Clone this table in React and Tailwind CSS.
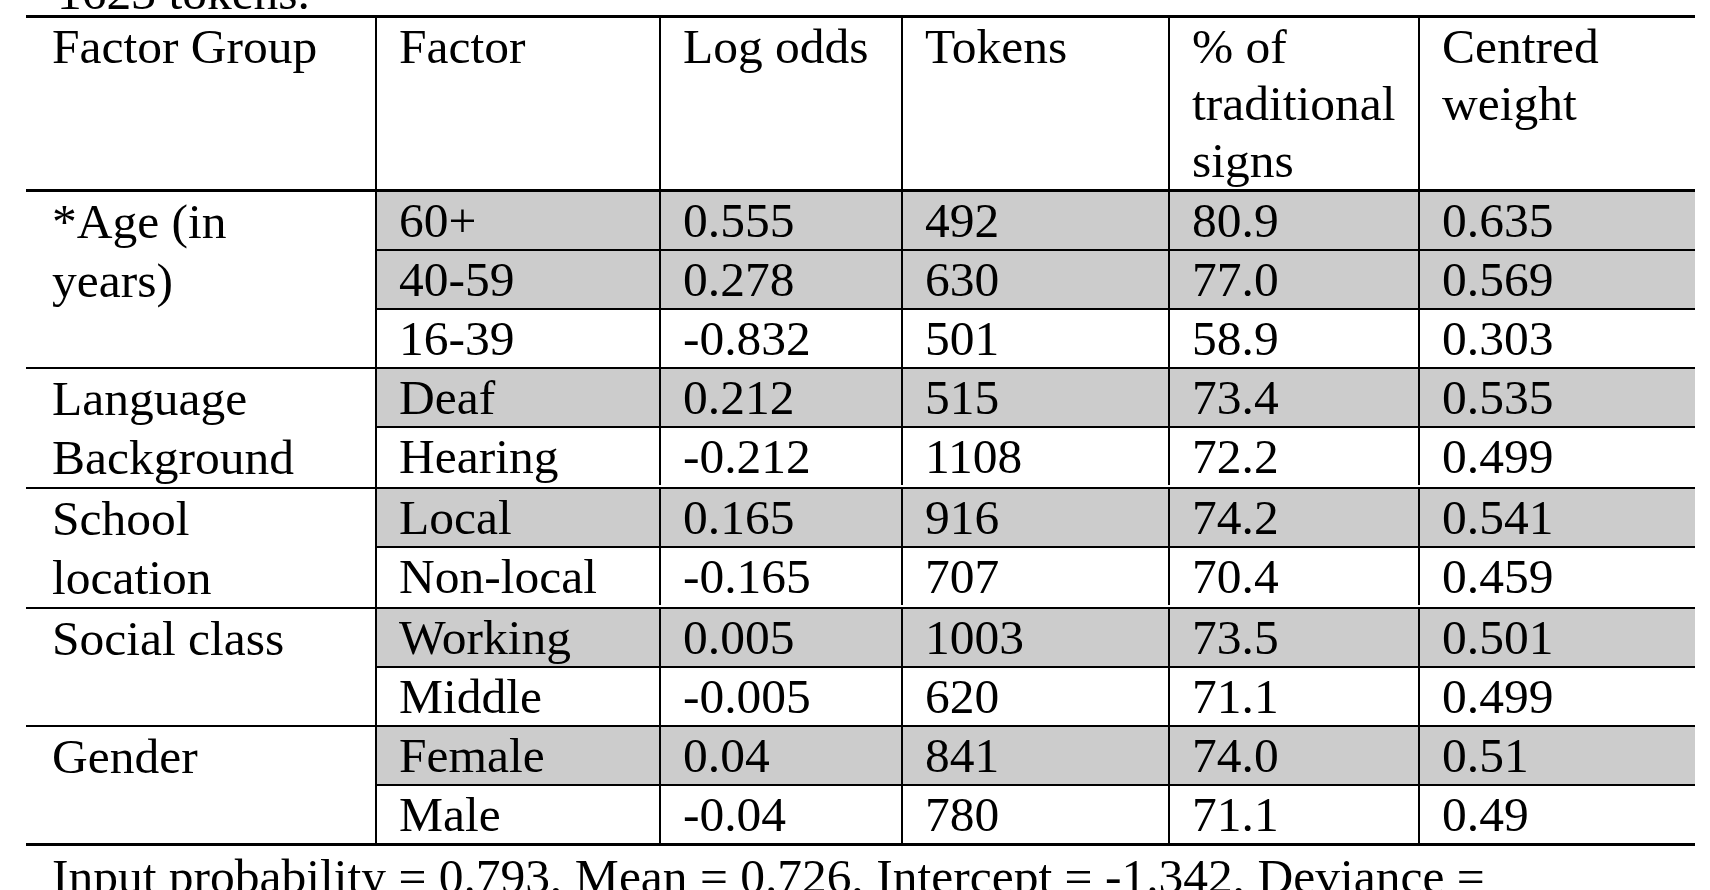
const groups = [
  {
    name: '*Age (in years)',
    rows: [
      ['60+', '0.555', '492', '80.9', '0.635', true],
      ['40-59', '0.278', '630', '77.0', '0.569', true],
      ['16-39', '-0.832', '501', '58.9', '0.303', false],
    ],
  },
  {
    name: 'Language Background',
    rows: [
      ['Deaf', '0.212', '515', '73.4', '0.535', true],
      ['Hearing', '-0.212', '1108', '72.2', '0.499', false],
    ],
  },
  {
    name: 'School location',
    rows: [
      ['Local', '0.165', '916', '74.2', '0.541', true],
      ['Non-local', '-0.165', '707', '70.4', '0.459', false],
    ],
  },
  {
    name: 'Social class',
    rows: [
      ['Working', '0.005', '1003', '73.5', '0.501', true],
      ['Middle', '-0.005', '620', '71.1', '0.499', false],
    ],
  },
  {
    name: 'Gender',
    rows: [
      ['Female', '0.04', '841', '74.0', '0.51', true],
      ['Male', '-0.04', '780', '71.1', '0.49', false],
    ],
  },
];

function Row({ cells, first }) {
  const [factor, logOdds, tokens, pct, weight, shaded] = cells;
  return (
    <div
      className={`flex ${first ? 'h-[57px]' : 'h-[59px] border-t-2 border-black'} ${
        shaded ? 'bg-[#cccccc]' : ''
      }`}
    >
      <div className="w-[282px] pl-[22px]">{factor}</div>
      <div className="w-[242px] border-l-2 border-black pl-[22px]">{logOdds}</div>
      <div className="w-[267px] border-l-2 border-black pl-[22px]">{tokens}</div>
      <div className="w-[250px] border-l-2 border-black pl-[22px]">{pct}</div>
      <div className="flex-1 border-l-2 border-black pl-[22px]">{weight}</div>
    </div>
  );
}

export default function App() {
  return (
    <div className="w-[1710px] h-[890px] overflow-hidden bg-white text-black font-['Liberation_Serif','Times_New_Roman',serif] text-[49.5px] leading-[57px]">
      <div className="h-[15px] flex flex-col">
        <p className="-mt-[36px] pl-[57px]">1623 tokens.</p>
      </div>

      <div className="ml-[26px] w-[1669px]">
        {/* header */}
        <div className="flex h-[177px] border-y-[3px] border-black">
          <div className="w-[351px] border-r-2 border-black pl-[26px] pr-[30px]">Factor Group</div>
          <div className="w-[282px] pl-[22px]">Factor</div>
          <div className="w-[242px] border-l-2 border-black pl-[22px]">Log odds</div>
          <div className="w-[267px] border-l-2 border-black pl-[22px]">Tokens</div>
          <div className="w-[250px] border-l-2 border-black pl-[22px] pr-[10px]">% of traditional signs</div>
          <div className="flex-1 border-l-2 border-black pl-[22px] pr-[10px]">Centred weight</div>
        </div>

        {/* body */}
        <div className="border-b-[3px] border-black">
          {groups.map((g, gi) => (
            <div key={g.name} className={`flex ${gi > 0 ? 'border-t-2 border-black' : ''}`}>
              <div className="w-[351px] border-r-2 border-black pl-[26px] pr-[30px] leading-[59px]">
                {g.name}
              </div>
              <div className="flex-1 flex flex-col">
                {g.rows.map((r, ri) => (
                  <Row key={r[0]} cells={r} first={ri === 0} />
                ))}
              </div>
            </div>
          ))}
        </div>
      </div>

      <p className="mt-[2px] ml-[52px] whitespace-nowrap">
        Input probability = 0.793, Mean = 0.726, Intercept = -1.342, Deviance =
      </p>
    </div>
  );
}
